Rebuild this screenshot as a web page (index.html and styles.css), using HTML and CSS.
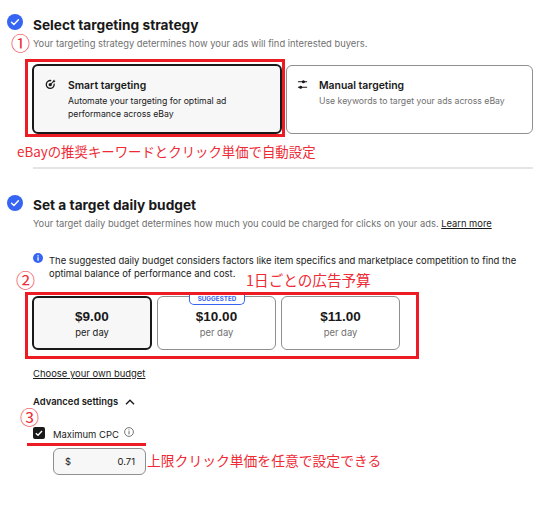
FILE: index.html
```html
<!DOCTYPE html>
<html lang="en">
<head>
    <meta charset="UTF-8">
    <title>Promoted listings</title>
    <link rel="stylesheet" href="styles.css">
</head>
<body>
    <div class="page">
        <section class="step step-first">
            <svg class="step-check" viewBox="0 0 16 16"><circle cx="8" cy="8" r="8" fill="#3665f3"/><path d="M4.6 8.3l2.3 2.2 4.5-4.7" fill="none" stroke="#fff" stroke-width="1.5" stroke-linecap="round" stroke-linejoin="round"/></svg>
            <h2>Select targeting strategy</h2>
            <p class="sub">Your targeting strategy determines how your ads will find interested buyers.</p>
            <div class="cards">
                <div class="card card-on">
                    <svg class="card-icon" viewBox="0 0 12 12"><path d="M9.9 5a4.3 4.3 0 1 1-3.1-3.2" fill="none" stroke="#191919" stroke-width="1.4"/><circle cx="5.7" cy="6.2" r="1.8" fill="#191919"/><path d="M5.9 6l3.6-3.6" fill="none" stroke="#191919" stroke-width="1.1"/><path d="M8.4 2.4L10 .6l.4 1.2 1.2.4-1.8 1.6z" fill="#191919"/></svg>
                    <div>
                        <strong>Smart targeting</strong>
                        <p>Automate your targeting for optimal ad performance across eBay</p>
                    </div>
                </div>
                <div class="card card-off">
                    <svg class="card-icon" viewBox="0 0 12 12"><path d="M1 3h10M1 9h10" stroke="#191919" stroke-width="1.1"/><circle cx="7" cy="3" r="1.7" fill="#191919"/><circle cx="4" cy="9" r="1.7" fill="#191919"/></svg>
                    <div>
                        <strong>Manual targeting</strong>
                        <p>Use keywords to target your ads across eBay</p>
                    </div>
                </div>
            </div>
        </section>

        <hr class="divider">

        <section class="step step-budget">
            <svg class="step-check" viewBox="0 0 16 16"><circle cx="8" cy="8" r="8" fill="#3665f3"/><path d="M4.6 8.3l2.3 2.2 4.5-4.7" fill="none" stroke="#fff" stroke-width="1.5" stroke-linecap="round" stroke-linejoin="round"/></svg>
            <h2>Set a target daily budget</h2>
            <p class="sub">Your target daily budget determines how much you could be charged for clicks on your ads. <a href="#" class="link">Learn more</a></p>
            <div class="notice">
                <svg class="notice-icon" viewBox="0 0 10 10"><circle cx="5" cy="5" r="5" fill="#3665f3"/><rect x="4.4" y="4.2" width="1.3" height="3.5" fill="#fff"/><rect x="4.4" y="2.2" width="1.3" height="1.3" fill="#fff"/></svg>
                <p>The suggested daily budget considers factors like item specifics and marketplace competition to find the optimal balance of performance and cost.</p>
            </div>
            <div class="budgets">
                <div class="budget budget-on"><b>$9.00</b><span>per day</span></div>
                <div class="budget">
                    <em class="badge">SUGGESTED</em>
                    <b>$10.00</b><span>per day</span>
                </div>
                <div class="budget"><b>$11.00</b><span>per day</span></div>
            </div>
            <a href="#" class="link own">Choose your own budget</a>
            <div class="advanced">
                <strong>Advanced settings</strong>
                <svg class="chevron" viewBox="0 0 10 6"><path d="M1 5.2l4-4 4 4" fill="none" stroke="#191919" stroke-width="1.4"/></svg>
            </div>
            <div class="cpc">
                <svg class="checkbox" viewBox="0 0 12 12"><rect width="12" height="12" rx="2" fill="#191919"/><path d="M2.8 6.2l2.2 2 4-4.2" fill="none" stroke="#fff" stroke-width="1.4"/></svg>
                <span>Maximum CPC</span>
                <svg class="cpc-info" viewBox="0 0 10 10"><circle cx="5" cy="5" r="4.4" fill="none" stroke="#555" stroke-width=".8"/><path d="M5 4.2v3.2M5 2.4v1" stroke="#555" stroke-width=".9"/></svg>
            </div>
            <div class="money"><span>$</span><span>0.71</span></div>
        </section>

        <!-- red notes drawn on top of the screenshot -->
        <div class="frame frame-one"></div>
        <div class="frame frame-two"></div>
        <div class="underline"></div>
        <span class="note num num-one">①</span>
        <span class="note num num-two">②</span>
        <span class="note num num-three">③</span>
        <span class="note note-one">eBayの推奨キーワードとクリック単価で自動設定</span>
        <span class="note note-two">1日ごとの広告予算</span>
        <span class="note note-three">上限クリック単価を任意で設定できる</span>
    </div>
</body>
</html>
```

FILE: styles.css
```css
* {
    box-sizing: border-box;
}
body {
    margin: 0;
    background: #fff;
    font-family: Inter, "Open Sans", sans-serif;
    color: #191919;
    font-size: 9.45px;
}
p {
    margin: 0;
}
.page {
    position: relative;
    width: 543px;
    height: 508px;
    padding: 16px 10px 0 7px;
    overflow: hidden;
}
.step {
    position: relative;
    padding-left: 26px;
}
.step-check {
    position: absolute;
    left: 0;
    top: -2px;
    width: 16px;
    height: 16px;
}
.step-budget {
    margin-top: 27px;
}
.step-budget .step-check {
    top: -1px;
}
h2 {
    margin: 0;
    font-size: 13.7px;
    line-height: 18px;
    font-weight: 700;
}
.sub {
    margin-top: 3px;
    line-height: 13px;
    font-size: 9.36px;
    color: #707070;
}
.link {
    color: #191919;
    text-decoration: underline;
}
.cards {
    display: flex;
    gap: 4px;
    margin-top: 14px;
    margin-left: -1px;
}
.card {
    display: flex;
    height: 70px;
    border-radius: 6px;
    padding: 13px 11px;
    font-size: 8.7px;
    line-height: 13px;
}
.card strong {
    display: block;
    margin: 0 0 3px;
    font-size: 10.4px;
    font-weight: 600;
    color: #191919;
}
.card-on {
    width: 250px;
    gap: 12px;
    background: #f7f7f7;
    border: 2px solid #191919;
}
.card-off {
    width: 247px;
    gap: 11px;
    margin: 1px 0;
    height: 69px;
    padding-left: 10px;
    border: 1px solid #8f8f8f;
    color: #707070;
}
.card-icon {
    flex: none;
    width: 11px;
    height: 11px;
}
.divider {
    margin: 32px 0 0 26px;
    height: 2px;
    width: 500px;
    border: 0;
    background: #e5e5e5;
}
.notice {
    display: flex;
    gap: 6px;
    margin-top: 24px;
}
.notice-icon {
    flex: none;
    width: 10px;
    height: 10px;
    margin-top: -1px;
}
.notice p {
    line-height: 13px;
    width: 490px;
}
.budgets {
    display: flex;
    gap: 5px;
    margin-top: 16px;
    margin-left: -1px;
}
.budget {
    position: relative;
    width: 119px;
    height: 54px;
    border: 1px solid #8f8f8f;
    border-radius: 6px;
    display: flex;
    flex-direction: column;
    align-items: center;
    justify-content: center;
    color: #707070;
}
.budget-on {
    width: 120px;
    background: #f7f7f7;
    border: 2px solid #191919;
    color: #191919;
}
.budget b {
    font-size: 13.5px;
    line-height: 18px;
    color: #191919;
    font-family: "Liberation Sans", sans-serif;
}
.budget span {
    font-size: 9.45px;
    line-height: 13px;
}
.badge {
    position: absolute;
    top: -2px;
    left: 31px;
    width: 56px;
    height: 10px;
    border: 1px solid #3665f3;
    border-top: 0;
    border-radius: 0 0 5px 5px;
    background: #fff;
    color: #3665f3;
    font-style: normal;
    font-weight: 700;
    font-size: 6.3px;
    line-height: 9px;
    text-align: center;
}
.own {
    display: inline-block;
    margin-top: 17px;
    line-height: 13px;
}
.advanced {
    display: flex;
    align-items: center;
    gap: 7px;
    margin-top: 15px;
    line-height: 13px;
}
.advanced strong {
    font-weight: 600;
}
.chevron {
    width: 10px;
    height: 6px;
}
.cpc {
    display: flex;
    align-items: center;
    margin-top: 18px;
    height: 14px;
}
.cpc span {
    padding-top: 3px;
}
.checkbox {
    width: 12px;
    height: 12px;
    margin-right: 8px;
}
.cpc-info {
    width: 10px;
    height: 10px;
    margin: -3px 0 0 5px;
}
.money {
    display: flex;
    justify-content: space-between;
    align-items: center;
    width: 93px;
    height: 27px;
    margin: 8px 0 0 20px;
    padding: 0 10px 0 11px;
    background: #f7f7f7;
    border: 1px solid #8f8f8f;
    border-radius: 6px;
}
.frame {
    position: absolute;
    border: 3px solid #ed1c24;
}
.frame-one {
    left: 25px;
    top: 59px;
    width: 260px;
    height: 78px;
}
.frame-two {
    left: 25px;
    top: 292px;
    width: 394px;
    height: 67px;
}
.underline {
    position: absolute;
    left: 27px;
    top: 443px;
    width: 119px;
    height: 3px;
    background: #ed1c24;
}
.note {
    position: absolute;
    color: #ee2a35;
    font-family: "Noto Sans CJK JP", sans-serif;
    font-size: 13.8px;
    line-height: 20px;
    white-space: nowrap;
}
.num {
    font-size: 19px;
    line-height: 20px;
}
.num-one {
    left: 11px;
    top: 33px;
}
.num-two {
    left: 16px;
    top: 270px;
}
.num-three {
    left: 20px;
    top: 407px;
}
.note-one {
    left: 17px;
    top: 141px;
    font-size: 13.4px;
}
.note-two {
    left: 246px;
    top: 270px;
    font-size: 14.6px;
}
.note-three {
    left: 147px;
    top: 450px;
}
```
